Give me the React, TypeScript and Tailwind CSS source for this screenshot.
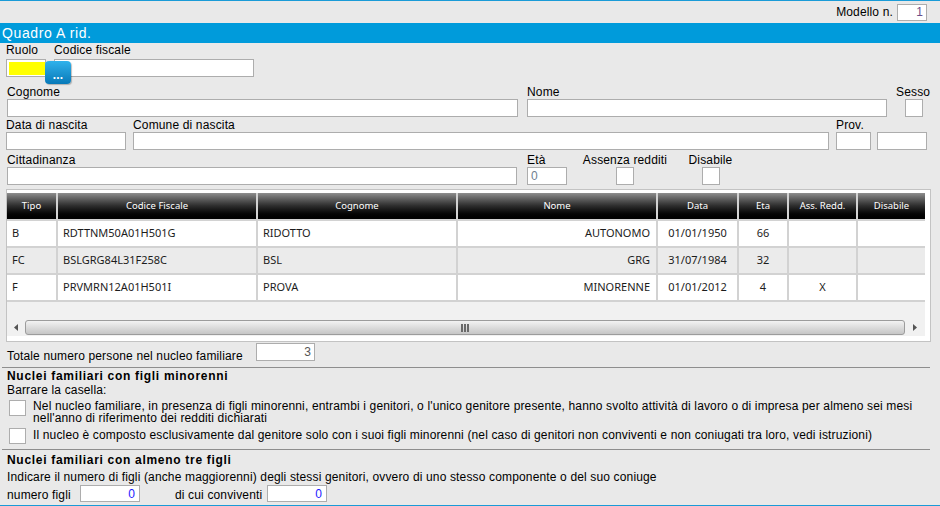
import React from "react";

const inputBox = "h-[18px] border border-[#adadad] bg-white";

const cols = ["Tipo", "Codice Fiscale", "Cognome", "Nome", "Data", "Eta", "Ass. Redd.", "Disabile"];
const align = [
  "justify-start pl-[5px]",
  "justify-start pl-[5px]",
  "justify-start pl-[5px]",
  "justify-end pr-[6px]",
  "justify-center",
  "justify-center",
  "justify-center",
  "justify-center",
];

const righe = [
  ["B", "RDTTNM50A01H501G", "RIDOTTO", "AUTONOMO", "01/01/1950", "66", "", ""],
  ["FC", "BSLGRG84L31F258C", "BSL", "GRG", "31/07/1984", "32", "", ""],
  ["F", "PRVMRN12A01H501I", "PROVA", "MINORENNE", "01/01/2012", "4", "X", ""],
];

function Label({ children }: { children?: React.ReactNode }) {
  return <span className="block h-[14px] leading-[14px] whitespace-nowrap">{children}</span>;
}

function Tabella() {
  return (
    <div className="ml-[6px] mt-[4px] flex h-[153px] w-[925px] flex-col border border-[#c3c3c3] bg-white pt-[3px] pr-[5px] pb-[5px] font-['Noto_Sans',sans-serif] tracking-normal">
      <div className="grid w-[918px] grid-cols-[49px_198px_198px_198px_79px_48px_67px_67px] gap-[2px] bg-[#d2d2d2] pb-[2px]">
        {cols.map((c) => (
          <div
            key={c}
            className="flex h-[26px] items-center justify-center bg-linear-to-b from-[#8e8e8e] via-[#2c2c2c] to-[#000000] text-[9.5px] text-white"
          >
            {c}
          </div>
        ))}
        {righe.map((r, i) =>
          r.map((v, j) => (
            <div
              key={`${i}-${j}`}
              className={`flex h-[25px] items-center text-[11px] text-[#1c1c1c] ${align[j]} ${i === 1 ? "bg-[#ebebeb]" : "bg-white"}`}
            >
              {v}
            </div>
          ))
        )}
      </div>
      <div className="h-[17px] w-[918px] bg-[#f1f1f1]" />
      <div className="flex h-[17px] w-[918px] items-center bg-[#f1f1f1]">
        <div className="flex w-[18px] justify-center">
          <svg width="4" height="7" viewBox="0 0 4 7">
            <path d="M4 0 L0 3.5 L4 7 Z" fill="#555" />
          </svg>
        </div>
        <div className="flex h-[15px] w-[880px] items-center justify-center rounded-[3px] border border-[#9c9c9c] bg-linear-to-b from-[#f3f3f3] to-[#c6c6c6]">
          <div className="flex gap-[1px]">
            <div className="h-[8px] w-[2px] bg-[#6a6a6a]" />
            <div className="h-[8px] w-[2px] bg-[#6a6a6a]" />
            <div className="h-[8px] w-[2px] bg-[#6a6a6a]" />
          </div>
        </div>
        <div className="flex w-[20px] justify-center">
          <svg width="4" height="7" viewBox="0 0 4 7">
            <path d="M0 0 L4 3.5 L0 7 Z" fill="#555" />
          </svg>
        </div>
      </div>
    </div>
  );
}

export default function App() {
  return (
    <div className="flex h-[506px] w-[940px] flex-col overflow-hidden bg-[#e9e9e9] font-['Liberation_Sans',Arial,sans-serif] text-[12px] tracking-[0.15px] text-black">
      <div className="h-[1px] bg-[#1a9bd7]" />

      <div className="flex h-[22px] items-center justify-end pr-[13px]">
        <span className="mr-[4px]">Modello n.</span>
        <div className="flex h-[17px] w-[30px] items-center justify-end border border-[#adadad] bg-white pr-[3px] text-[#6b4f8a]">
          1
        </div>
      </div>

      <div className="h-[20px] bg-[#009bdb] pl-[2px] text-[14px] leading-[20px] tracking-[0.6px] text-white">Quadro A rid.</div>

      {/* Ruolo / Codice fiscale */}
      <div className="relative flex h-[34px] pl-[6px]">
        <div className="flex flex-col">
          <Label>Ruolo</Label>
          <div className={`mt-[2px] w-[40px] pt-[2px] pl-[2px] pb-[1px] ${inputBox}`}>
            <div className="h-full bg-[#ffff00]" />
          </div>
        </div>
        <div className="ml-[8px] flex flex-col">
          <Label>Codice fiscale</Label>
          <div className={`mt-[2px] w-[200px] ${inputBox}`} />
        </div>
        <button className="absolute left-[45px] top-[18px] flex h-[23px] w-[26px] items-end justify-center rounded-[4px] bg-linear-to-b from-[#2fb2ec] to-[#0679b8] pb-[3px] text-[12px] leading-[12px] font-bold text-white shadow-[1px_1px_1px_rgba(0,0,0,0.25)]">
          ...
        </button>
      </div>

      {/* Cognome / Nome / Sesso */}
      <div className="mt-[8px] flex pl-[7px]">
        <div className="flex w-[511px] flex-col">
          <Label>Cognome</Label>
          <div className={inputBox} />
        </div>
        <div className="ml-[9px] flex w-[360px] flex-col">
          <Label>Nome</Label>
          <div className={inputBox} />
        </div>
        <div className="ml-[9px] flex flex-col">
          <Label>Sesso</Label>
          <div className={`ml-[9px] w-[18px] ${inputBox}`} />
        </div>
      </div>

      {/* Data / Comune / Prov */}
      <div className="mt-[1px] flex pl-[6px]">
        <div className="flex w-[120px] flex-col">
          <Label>Data di nascita</Label>
          <div className={inputBox} />
        </div>
        <div className="ml-[7px] flex w-[696px] flex-col">
          <Label>Comune di nascita</Label>
          <div className={inputBox} />
        </div>
        <div className="ml-[7px] flex w-[35px] flex-col">
          <Label>Prov.</Label>
          <div className={inputBox} />
        </div>
        <div className="ml-[6px] flex w-[50px] flex-col">
          <Label />
          <div className={inputBox} />
        </div>
      </div>

      {/* Cittadinanza / Età / Assenza redditi / Disabile */}
      <div className="mt-[3px] flex pl-[7px]">
        <div className="flex w-[510px] flex-col">
          <Label>Cittadinanza</Label>
          <div className={inputBox} />
        </div>
        <div className="ml-[10px] flex w-[40px] flex-col">
          <Label>Età</Label>
          <div className={`flex items-center pl-[3px] text-[#6f8090] ${inputBox}`}>0</div>
        </div>
        <div className="ml-[15px] flex w-[86px] flex-col items-center">
          <Label>Assenza redditi</Label>
          <div className={`w-[18px] ${inputBox}`} />
        </div>
        <div className="ml-[20px] flex w-[45px] flex-col items-center">
          <Label>Disabile</Label>
          <div className={`w-[18px] ${inputBox}`} />
        </div>
      </div>

      <Tabella />

      <div className="mt-[1px] flex items-start pl-[7px]">
        <span className="mt-[6px] block w-[249px] leading-[14px]">Totale numero persone nel nucleo familiare</span>
        <div className={`flex w-[59px] items-center justify-end pr-[3px] text-[#555555] ${inputBox}`}>3</div>
      </div>

      <div className="mt-[4px] ml-[2px] h-[1px] w-[928px] bg-[#8e8e8e]" />

      <div className="mt-[1px] pl-[7px]">
        <span className="block leading-[14px] font-bold tracking-[0.7px]">Nuclei familiari con figli minorenni</span>
        <span className="block leading-[14px]">Barrare la casella:</span>
      </div>

      <div className="mt-[3px] flex pl-[9px]">
        <div className="h-[16px] w-[17px] shrink-0 border border-[#adadad] bg-white" />
        <p className="ml-[7px] leading-[12px] whitespace-nowrap">
          Nel nucleo familiare, in presenza di figli minorenni, entrambi i genitori, o l'unico genitore presente, hanno svolto attività di lavoro o di impresa per almeno sei mesi
          <br />
          nell'anno di riferimento dei redditi dichiarati
        </p>
      </div>

      <div className="mt-[4px] flex pl-[9px]">
        <div className="h-[16px] w-[17px] shrink-0 border border-[#adadad] bg-white" />
        <p className="ml-[7px] mt-[1px] leading-[12px] whitespace-nowrap">
          Il nucleo è composto esclusivamente dal genitore solo con i suoi figli minorenni (nel caso di genitori non conviventi e non coniugati tra loro, vedi istruzioni)
        </p>
      </div>

      <div className="mt-[5px] ml-[2px] h-[1px] w-[928px] bg-[#8e8e8e]" />

      <div className="mt-[3px] pl-[7px]">
        <span className="block leading-[14px] font-bold tracking-[0.7px]">Nuclei familiari con almeno tre figli</span>
        <span className="mt-[3px] block leading-[14px]">
          Indicare il numero di figli (anche maggiorenni) degli stessi genitori, ovvero di uno stesso componente o del suo coniuge
        </span>
      </div>

      <div className="mt-[1px] flex items-end pl-[7px]">
        <span className="block w-[73px] leading-[14px]">numero figli</span>
        <div className="flex h-[17px] w-[60px] items-center justify-end border border-[#adadad] bg-white pr-[4px] text-[#1a1aff]">0</div>
        <span className="ml-[35px] block w-[92px] leading-[14px]">di cui conviventi</span>
        <div className="flex h-[17px] w-[60px] items-center justify-end border border-[#adadad] bg-white pr-[4px] text-[#1a1aff]">0</div>
      </div>

      <div className="mt-auto h-[1px] bg-[#1a9bd7]" />
    </div>
  );
}
